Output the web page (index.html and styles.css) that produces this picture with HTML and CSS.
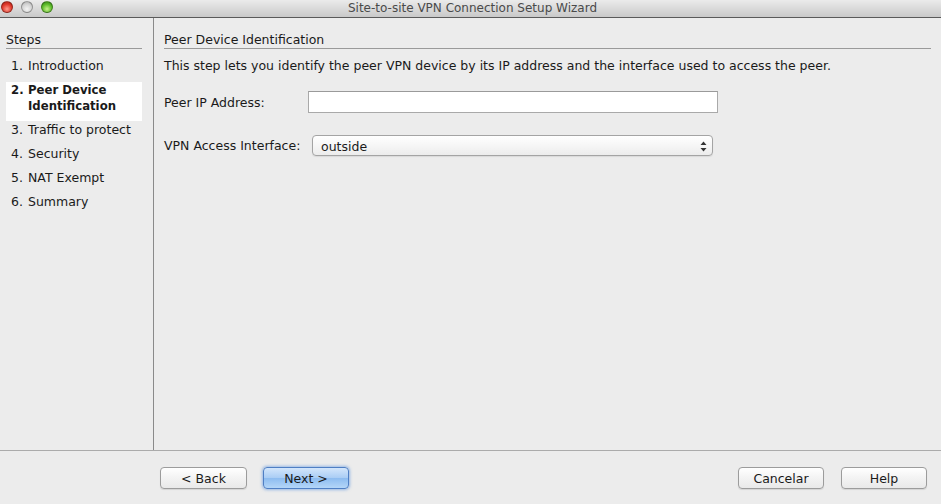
FILE: index.html
```html
<!DOCTYPE html>
<html>
<head>
<meta charset="utf-8">
<link rel="stylesheet" href="styles.css">
</head>
<body>
<div class="window">
  <div class="titlebar">
    <div class="lights">
      <span class="light red"></span>
      <span class="light gray"></span>
      <span class="light green"></span>
    </div>
    <div class="title">Site-to-site VPN Connection Setup Wizard</div>
  </div>
  <div class="main">
    <div class="sidebar">
      <div class="section-title">Steps</div>
      <ul class="steps">
        <li class="step"><span class="num">1.</span><span>Introduction</span></li>
        <li class="step current"><span class="num">2.</span><span>Peer Device<br>Identification</span></li>
        <li class="step"><span class="num">3.</span><span>Traffic to protect</span></li>
        <li class="step"><span class="num">4.</span><span>Security</span></li>
        <li class="step"><span class="num">5.</span><span>NAT Exempt</span></li>
        <li class="step"><span class="num">6.</span><span>Summary</span></li>
      </ul>
    </div>
    <div class="content">
      <div class="section-title">Peer Device Identification</div>
      <p class="desc">This step lets you identify the peer VPN device by its IP address and the interface used to access the peer.</p>
      <div class="form">
        <label class="label">Peer IP Address:</label>
        <div class="textfield"></div>
        <label class="label">VPN Access Interface:</label>
        <div class="select">
          <span>outside</span>
          <svg class="arrows" width="7" height="11" viewBox="0 0 7 11"><path d="M3.5 0.5 L6.5 4 L0.5 4 Z M0.5 7 L6.5 7 L3.5 10.5 Z" fill="#333"/></svg>
        </div>
      </div>
    </div>
  </div>
  <div class="footer">
    <div class="btn-group">
      <button class="btn">&lt; Back</button>
      <button class="btn primary">Next &gt;</button>
    </div>
    <div class="btn-group right">
      <button class="btn">Cancelar</button>
      <button class="btn">Help</button>
    </div>
  </div>
</div>
</body>
</html>
```
FILE: styles.css
```css
* { box-sizing: border-box; }
html, body { margin: 0; padding: 0; }
body {
  width: 941px;
  height: 504px;
  overflow: hidden;
  background: #ececec;
  font-family: "DejaVu Sans", "Liberation Sans", sans-serif;
  font-size: 12.5px;
  color: #1a1a1a;
}
.window { display: flex; flex-direction: column; height: 504px; }
.titlebar {
  height: 18px;
  flex: 0 0 18px;
  background: linear-gradient(#ebebeb, #c9c9c9);
  border-bottom: 1px solid #5a5a5a;
  display: flex;
  align-items: center;
  position: relative;
}
.lights { display: flex; gap: 8px; padding-left: 1px; position: absolute; left: 0; top: 1px; }
.light {
  width: 12px; height: 12px; border-radius: 50%;
  border: 1px solid rgba(0,0,0,0.3);
}
.red { background: radial-gradient(circle at 50% 70%, #ff9a8c, #e0392b 55%, #a51d12); }
.gray { background: radial-gradient(circle at 50% 70%, #f4f4f4, #d4d4d4 55%, #a8a8a8); }
.green { background: radial-gradient(circle at 50% 70%, #c6f28a, #5dbb2a 55%, #2f7c12); }
.title {
  flex: 1;
  text-align: center;
  font-size: 12px;
  color: #4a4a4a;
  line-height: 17px;
  padding-left: 4px;
}
.main { display: flex; height: 432px; flex: 0 0 432px; }
.sidebar {
  width: 154px;
  border-right: 1px solid #8a8a8a;
  padding: 13px 11px 0 6px;
}
.section-title {
  line-height: 17px;
  border-bottom: 1px solid #9a9a9a;
  color: #1a1a1a;
}
.steps {
  list-style: none;
  margin: 9px 0 0;
  padding: 0;
  display: flex;
  flex-direction: column;
  gap: 8px;
}
.step { display: flex; line-height: 16px; padding-left: 5px; }
.num { width: 17px; flex: 0 0 17px; }
.step.current {
  background: #fff;
  font-weight: bold;
  font-size: 11.7px;
  padding-bottom: 7px;
  margin-bottom: -7px;
}
.content { flex: 1; padding: 13px 10px 0 10px; }
.desc { margin: 9px 0 0; line-height: 16px; }
.form {
  display: grid;
  grid-template-columns: 144px 410px;
  grid-template-rows: 22px 21px;
  row-gap: 22px;
  margin-top: 17px;
  align-items: center;
}
.label { line-height: 16px; padding-top: 1px; }
.textfield {
  height: 22px;
  background: #fff;
  border: 1px solid #a9a9a9;
  border-top-color: #9a9a9a;
}
.select {
  height: 21px;
  margin: 0 5px 0 4px;
  border: 1px solid #a4a4a4;
  border-radius: 4px;
  background: linear-gradient(#ffffff, #f6f6f6 50%, #ececec);
  display: flex;
  align-items: center;
  justify-content: space-between;
  padding: 1px 5px 0 8px;
  box-shadow: 0 1px 1px rgba(0,0,0,0.08);
}
.arrows { display: block; }
.footer {
  flex: 1;
  border-top: 1px solid #ababab;
  display: flex;
  justify-content: space-between;
  padding: 16px 14px 0 160px;
}
.btn-group { display: flex; gap: 16px; align-items: flex-start; }
.btn-group.right { gap: 17px; }
.btn {
  width: 86px;
  height: 22px;
  font-family: inherit;
  font-size: 12.5px;
  color: #1a1a1a;
  border: 1px solid #9c9c9c;
  border-radius: 4px;
  background: linear-gradient(#ffffff, #f3f3f3 50%, #e9e9e9);
  padding: 0;
  box-shadow: 0 1px 1px rgba(0,0,0,0.1);
}
.btn-group:first-child .btn:first-child { width: 87px; }
.btn.primary {
  border-color: #4f7fc4;
  background: linear-gradient(#d3e6fb, #a9cdf5 50%, #8dbcf0 51%, #b4d6f8);
  box-shadow: 0 0 3px 1px rgba(80,140,220,0.55);
}
```
